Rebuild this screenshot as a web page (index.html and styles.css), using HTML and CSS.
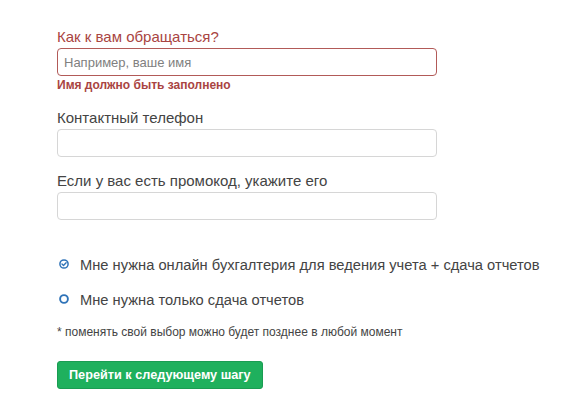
FILE: index.html
```html
<!DOCTYPE html>
<html lang="ru">
<head>
<meta charset="utf-8">
<title>Форма</title>
<link rel="stylesheet" href="styles.css">
</head>
<body>
<form class="form">
  <div class="group has-error">
    <label class="label" for="name">Как к вам обращаться?</label>
    <input class="field" id="name" type="text" placeholder="Например, ваше имя">
    <div class="error">Имя должно быть заполнено</div>
  </div>
  <div class="group">
    <label class="label" for="phone">Контактный телефон</label>
    <input class="field" id="phone" type="text">
  </div>
  <div class="group">
    <label class="label" for="promo">Если у вас есть промокод, укажите его</label>
    <input class="field" id="promo" type="text">
  </div>
  <div class="options">
    <div class="option">
      <svg class="radio" width="10" height="10" viewBox="0 0 10 10"><circle cx="5" cy="5" r="4.1" fill="none" stroke="#2f73b8" stroke-width="1.5"/><path d="M3 5.1 L4.5 6.5 L7.1 3.8" fill="none" stroke="#2f73b8" stroke-width="1.4" stroke-linecap="round" stroke-linejoin="round"/></svg>
      <span>Мне нужна онлайн бухгалтерия для ведения учета + сдача отчетов</span>
    </div>
    <div class="option">
      <svg class="radio" width="10" height="10" viewBox="0 0 10 10"><circle cx="5" cy="5" r="3.9" fill="none" stroke="#2f73b8" stroke-width="1.9"/></svg>
      <span>Мне нужна только сдача отчетов</span>
    </div>
  </div>
  <p class="note">* поменять свой выбор можно будет позднее в любой момент</p>
  <button class="btn" type="button">Перейти к следующему шагу</button>
</form>
</body>
</html>
```
FILE: styles.css
```css
html, body {
  margin: 0;
  padding: 0;
  background: #fff;
}
body {
  font-family: "Liberation Sans", Arial, sans-serif;
  color: #444;
}
.form {
  padding: 27px 0 0 57px;
  width: 380px;
}
.group {
  margin-bottom: 14px;
}
.label {
  display: block;
  font-size: 15px;
  line-height: 20px;
  margin-bottom: 1px;
  color: #444;
}
.field {
  display: block;
  box-sizing: border-box;
  width: 380px;
  height: 28px;
  margin: 0;
  padding: 0 6px;
  border: 1px solid #d6d6d6;
  border-radius: 4px;
  font-family: "Liberation Sans", Arial, sans-serif;
  font-size: 13px;
  color: #555;
  background: #fff;
  outline: none;
}
.field::placeholder {
  color: #808080;
}
.has-error .label {
  color: #a94442;
}
.has-error .field {
  border-color: #b25a58;
}
.error {
  font-size: 12px;
  line-height: 18px;
  font-weight: bold;
  color: #a94442;
}
.options {
  margin-top: 35px;
  display: flex;
  flex-direction: column;
  gap: 15px;
  width: 520px;
}
.option {
  display: flex;
  align-items: center;
  gap: 11px;
  font-size: 14.7px;
  line-height: 20px;
  color: #444;
}
.radio {
  margin-left: 2px;
  margin-top: -2px;
  flex: none;
}
.note {
  margin: 14px 0 0;
  width: 520px;
  font-size: 12px;
  line-height: 17px;
  color: #444;
}
.btn {
  display: block;
  margin-top: 20px;
  box-sizing: border-box;
  height: 28px;
  padding: 0 11px;
  border: 1px solid #1a9c52;
  border-radius: 3px;
  background: #1fb05d;
  color: #fff;
  font-family: "Liberation Sans", Arial, sans-serif;
  font-size: 12.7px;
  font-weight: bold;
  line-height: 24px;
  white-space: nowrap;
}
```
